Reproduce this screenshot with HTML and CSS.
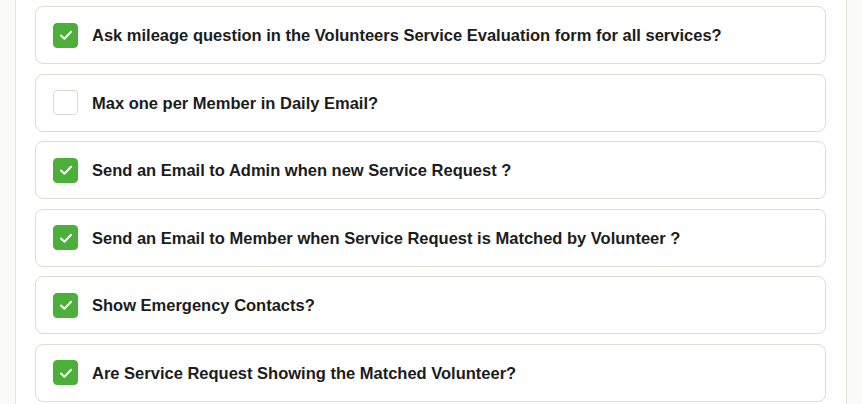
FILE: index.html
```html
<!DOCTYPE html>
<html lang="en">
<head>
<meta charset="utf-8">
<title>Settings</title>
<link rel="stylesheet" href="styles.css">
</head>
<body>
<div class="panel">
  <label class="option">
    <span class="box checked"><svg viewBox="0 0 24 24"><path d="M6.5 12.5l3.8 3.6 7.2-7.6"/></svg></span>
    <span class="text">Ask mileage question in the Volunteers Service Evaluation form for all services?</span>
  </label>
  <label class="option">
    <span class="box"></span>
    <span class="text">Max one per Member in Daily Email?</span>
  </label>
  <label class="option">
    <span class="box checked"><svg viewBox="0 0 24 24"><path d="M6.5 12.5l3.8 3.6 7.2-7.6"/></svg></span>
    <span class="text">Send an Email to Admin when new Service Request ?</span>
  </label>
  <label class="option">
    <span class="box checked"><svg viewBox="0 0 24 24"><path d="M6.5 12.5l3.8 3.6 7.2-7.6"/></svg></span>
    <span class="text">Send an Email to Member when Service Request is Matched by Volunteer ?</span>
  </label>
  <label class="option">
    <span class="box checked"><svg viewBox="0 0 24 24"><path d="M6.5 12.5l3.8 3.6 7.2-7.6"/></svg></span>
    <span class="text">Show Emergency Contacts?</span>
  </label>
  <label class="option">
    <span class="box checked"><svg viewBox="0 0 24 24"><path d="M6.5 12.5l3.8 3.6 7.2-7.6"/></svg></span>
    <span class="text">Are Service Request Showing the Matched Volunteer?</span>
  </label>
</div>
</body>
</html>
```
FILE: styles.css
```css
html, body {
  margin: 0;
  padding: 0;
  background: #fafaf8;
  font-family: "Liberation Sans", Arial, sans-serif;
}
.panel {
  margin-left: 15px;
  width: 791px;
  background: #ffffff;
  border-left: 1px solid #e4e4de;
  border-right: 1px solid #e4e4de;
  padding: 6px 20px 10px 19px;
  display: flex;
  flex-direction: column;
  gap: 9.5px;
  min-height: 404px;
  box-sizing: content-box;
}
.option {
  display: flex;
  align-items: center;
  height: 58px;
  box-sizing: border-box;
  border: 1px solid #dcdcd3;
  border-radius: 8px;
  padding: 0 17px;
  background: #fff;
}
.box {
  width: 25px;
  height: 25px;
  box-sizing: border-box;
  border: 1px solid #d9d9d2;
  border-radius: 4px;
  background: #fff;
  flex: none;
  display: flex;
  align-items: center;
  justify-content: center;
}
.box.checked {
  background: #4caf3a;
  border-color: #4caf3a;
}
.box svg {
  width: 22px;
  height: 22px;
  fill: none;
  stroke: #fff;
  stroke-width: 2.2;
  stroke-linecap: round;
  stroke-linejoin: round;
}
.text {
  margin-left: 14px;
  padding-top: 1px;
  font-size: 16.5px;
  font-weight: bold;
  color: #1c1c1c;
}
```
